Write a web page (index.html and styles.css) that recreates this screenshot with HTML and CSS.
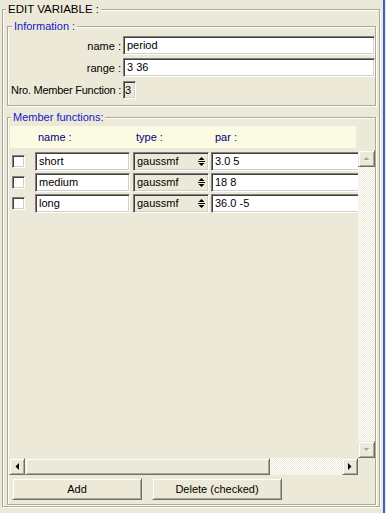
FILE: index.html
```html
<!DOCTYPE html>
<html>
<head>
<meta charset="utf-8">
<link rel="stylesheet" href="styles.css">
</head>
<body>
<div class="window">
  <fieldset class="group outer">
    <legend class="outer-legend">EDIT VARIABLE :</legend>

    <fieldset class="group info">
      <legend class="blue-legend">Information :</legend>
      <div class="info-grid">
        <label class="info-label">name :</label>
        <div class="field wide">period</div>
        <label class="info-label">range :</label>
        <div class="field wide">3 36</div>
        <label class="info-label tight">Nro. Member Function :</label>
        <div class="field small disabled">3</div>
      </div>
    </fieldset>

    <fieldset class="group members">
      <legend class="blue-legend">Member functions:</legend>
      <div class="pane">
        <div class="header">
          <span class="h-name">name :</span>
          <span class="h-type">type :</span>
          <span class="h-par">par :</span>
        </div>
        <div class="scroll">
          <div class="rows">
            <div class="row">
              <span class="check"></span>
              <div class="field name">short</div>
              <div class="field type disabled"><span>gaussmf</span><svg class="spin" width="7" height="11" viewBox="0 0 7 11"><path d="M0.5 4 L3.5 1 L6.5 4 Z" fill="#000"/><rect x="0" y="5" width="7" height="1" fill="#000"/><path d="M0.5 7 L6.5 7 L3.5 10 Z" fill="#000"/></svg></div>
              <div class="field par">3.0 5</div>
            </div>
            <div class="row">
              <span class="check"></span>
              <div class="field name">medium</div>
              <div class="field type disabled"><span>gaussmf</span><svg class="spin" width="7" height="11" viewBox="0 0 7 11"><path d="M0.5 4 L3.5 1 L6.5 4 Z" fill="#000"/><rect x="0" y="5" width="7" height="1" fill="#000"/><path d="M0.5 7 L6.5 7 L3.5 10 Z" fill="#000"/></svg></div>
              <div class="field par">18 8</div>
            </div>
            <div class="row">
              <span class="check"></span>
              <div class="field name">long</div>
              <div class="field type disabled"><span>gaussmf</span><svg class="spin" width="7" height="11" viewBox="0 0 7 11"><path d="M0.5 4 L3.5 1 L6.5 4 Z" fill="#000"/><rect x="0" y="5" width="7" height="1" fill="#000"/><path d="M0.5 7 L6.5 7 L3.5 10 Z" fill="#000"/></svg></div>
              <div class="field par">36.0 -5</div>
            </div>
          </div>
          <div class="vbar">
            <div class="sbtn"><svg width="8" height="5" viewBox="0 0 8 5"><path d="M1.5 4.5 L4.5 1.5 L7.5 4.5 Z" fill="#fff"/><path d="M0.5 4 L3.5 1 L6.5 4 Z" fill="#ACA899"/></svg></div>
            <div class="track"></div>
            <div class="sbtn"><svg width="8" height="5" viewBox="0 0 8 5"><path d="M1.5 1.5 L7.5 1.5 L4.5 4.5 Z" fill="#fff"/><path d="M0.5 1 L6.5 1 L3.5 4 Z" fill="#ACA899"/></svg></div>
          </div>
          <div class="hbar">
            <div class="sbtn"><svg width="4" height="7" viewBox="0 0 4 7"><path d="M4 0 L0.5 3.5 L4 7 Z" fill="#000"/></svg></div>
            <div class="thumb"></div>
            <div class="track"></div>
            <div class="sbtn"><svg width="4" height="7" viewBox="0 0 4 7"><path d="M0 0 L3.5 3.5 L0 7 Z" fill="#000"/></svg></div>
          </div>
          <div class="corner"></div>
        </div>
      </div>
      <div class="buttons">
        <button class="btn">Add</button>
        <button class="btn">Delete (checked)</button>
      </div>
    </fieldset>
  </fieldset>
</div>
</body>
</html>
```
FILE: styles.css
```css
* { box-sizing: border-box; }
html, body {
  margin: 0;
  padding: 0;
  background: #ECE9D8;
  width: 386px;
  height: 513px;
  overflow: hidden;
  font-family: "Liberation Sans", Arial, sans-serif;
  font-size: 11px;
  color: #000;
}
.window {
  width: 385px;
  height: 513px;
  border-right: 2px solid #3A5FCD;
  padding-top: 2px;
}
.group {
  border: 1px solid #ACA899;
  box-shadow: inset 1px 1px 0 #fff, 1px 1px 0 #fff;
  margin: 0;
  min-width: 0;
}
.outer {
  margin-left: 2px;
  width: 378px;
  padding: 0 3px 1px 4px;
}
.outer-legend {
  padding: 0 2px;
  margin-left: -1px;
  line-height: 15px;
  font-size: 11.5px;
  background: #ECE9D8;
}
.blue-legend {
  padding: 0 2px;
  margin-left: 2px;
  line-height: 14px;
  color: #1515CC;
  font-size: 11px;
  background: #ECE9D8;
}
.info {
  margin-top: 2px;
  padding: 3px 0 6px 2px;
}
.info-grid {
  display: grid;
  grid-template-columns: 111px 1fr;
  grid-template-rows: 19px 19px 19px;
  column-gap: 2px;
  row-gap: 3px;
  align-items: center;
}
.info-label {
  text-align: right;
  white-space: nowrap;
}
.info-label.tight { letter-spacing: -0.25px; }
.field {
  height: 19px;
  background: #fff;
  border: 1px solid;
  border-color: #808080 #fff #fff #808080;
  box-shadow: inset 1px 1px 0 #404040, inset -1px -1px 0 #D4D0C8;
  padding: 0 3px;
  line-height: 17px;
  white-space: nowrap;
  overflow: hidden;
}
.field.disabled { background: #ECE9D8; }
.field.small {
  width: 13px;
  height: 18px;
  padding: 0 1px;
  line-height: 16px;
}
.members {
  margin-top: 4px;
  padding: 1px 0 4px 1px;
}
.pane {
  width: 366px;
  margin-top: 1px;
}
.header {
  margin-left: 1px;
  width: 346px;
  height: 22px;
  background: #FBFAE3;
  color: #000080;
  display: flex;
  align-items: center;
  font-size: 11px;
}
.h-name { margin-left: 28px; width: 98px; }
.h-type { width: 79px; }
.scroll {
  margin-top: 2px;
  display: grid;
  grid-template-columns: 349px 17px;
  grid-template-rows: 308px 17px;
}
.rows {
  overflow: hidden;
  padding-top: 2px;
  display: flex;
  flex-direction: column;
  gap: 2px;
}
.row {
  display: flex;
  align-items: center;
  height: 19px;
  padding-left: 3px;
}
.check {
  flex: none;
  width: 13px;
  height: 13px;
  background: #fff;
  border: 1px solid;
  border-color: #808080 #fff #fff #808080;
  box-shadow: inset 1px 1px 0 #404040, inset -1px -1px 0 #D4D0C8;
  margin-right: 10px;
}
.field.name { flex: none; width: 95px; margin-right: 3px; }
.field.type {
  flex: none;
  width: 76px;
  margin-right: 2px;
  display: flex;
  align-items: center;
  justify-content: space-between;
  padding-right: 3px;
}
.spin { display: block; }
.field.par { flex: none; width: 150px; }
.vbar {
  display: flex;
  flex-direction: column;
}
.hbar {
  display: flex;
}
.track {
  flex: 1;
  background-image: repeating-conic-gradient(#fff 0 25%, #ECE9D8 0 50%);
  background-size: 2px 2px;
}
.sbtn, .thumb, .btn {
  background: #ECE9D8;
  border: 1px solid;
  border-color: #ECE9D8 #716F64 #716F64 #ECE9D8;
  box-shadow: inset 1px 1px 0 #fff, inset -1px -1px 0 #ACA899;
}
.sbtn {
  flex: none;
  width: 17px;
  height: 17px;
  display: flex;
  align-items: center;
  justify-content: center;
}
.hbar .sbtn { width: 16px; }
.thumb {
  flex: none;
  width: 245px;
  height: 17px;
}
.corner { background: #ECE9D8; }
.buttons {
  display: flex;
  gap: 10px;
  margin-top: 3px;
  padding-left: 3px;
}
.btn {
  width: 130px;
  height: 22px;
  font-family: "Liberation Sans", Arial, sans-serif;
  font-size: 11px;
  color: #000;
  padding: 0;
}
```
